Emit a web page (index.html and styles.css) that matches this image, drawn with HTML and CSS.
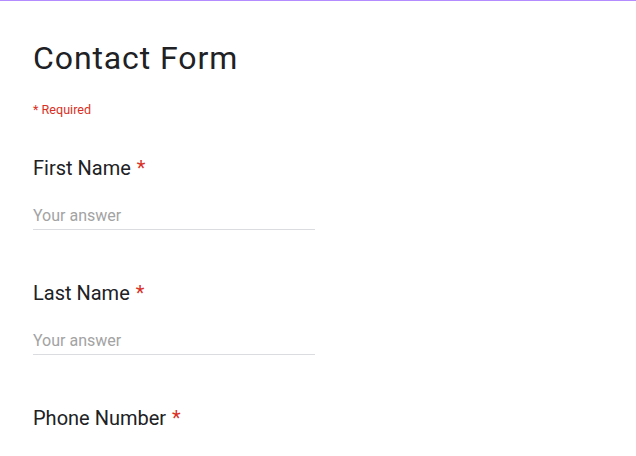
FILE: index.html
```html
<!DOCTYPE html>
<html lang="en">
<head>
<meta charset="utf-8">
<title>Contact Form</title>
<link rel="stylesheet" href="styles.css">
</head>
<body>
<main class="form">
  <header class="form-header">
    <h1 class="form-title">Contact Form</h1>
    <p class="required-note">* Required</p>
  </header>
  <div class="questions">
    <div class="question">
      <label class="question-label" for="first">First Name <span class="star">*</span></label>
      <input class="answer" id="first" type="text" placeholder="Your answer">
    </div>
    <div class="question">
      <label class="question-label" for="last">Last Name <span class="star">*</span></label>
      <input class="answer" id="last" type="text" placeholder="Your answer">
    </div>
    <div class="question">
      <label class="question-label" for="phone">Phone Number <span class="star">*</span></label>
      <input class="answer" id="phone" type="text" placeholder="Your answer">
    </div>
  </div>
</main>
</body>
</html>
```
FILE: styles.css
```css
html, body {
  margin: 0;
  padding: 0;
  background: #ffffff;
}
body {
  border-top: 1px solid #b58cff;
  font-family: Roboto, "Liberation Sans", Arial, sans-serif;
  color: #202124;
  overflow: hidden;
  height: 455px;
}
.form {
  padding: 37px 0 0 33px;
}
.form-header {
  display: flex;
  flex-direction: column;
  gap: 24px;
}
.form-title {
  margin: 0;
  font-size: 32px;
  line-height: 40px;
  font-weight: 400;
  letter-spacing: 0.9px;
  color: #202124;
}
.required-note {
  margin: 0;
  font-size: 12.6px;
  line-height: 16px;
  color: #d93025;
}
.questions {
  margin-top: 38px;
  display: flex;
  flex-direction: column;
  gap: 51px;
}
.question {
  display: flex;
  flex-direction: column;
  align-items: flex-start;
  gap: 26px;
}
.question-label {
  font-size: 20px;
  line-height: 24px;
  font-weight: 400;
  color: #202124;
}
.star {
  color: #d93025;
  margin-left: 1px;
}
.answer {
  box-sizing: content-box;
  width: 282px;
  height: 20px;
  margin: 0;
  padding: 0 0 3px 0;
  border: none;
  border-bottom: 1px solid #dadce0;
  outline: none;
  font-family: Roboto, "Liberation Sans", Arial, sans-serif;
  font-size: 16px;
  line-height: 20px;
  color: #202124;
  background: transparent;
}
.answer::placeholder {
  color: #a3a3a3;
  opacity: 1;
}
```
